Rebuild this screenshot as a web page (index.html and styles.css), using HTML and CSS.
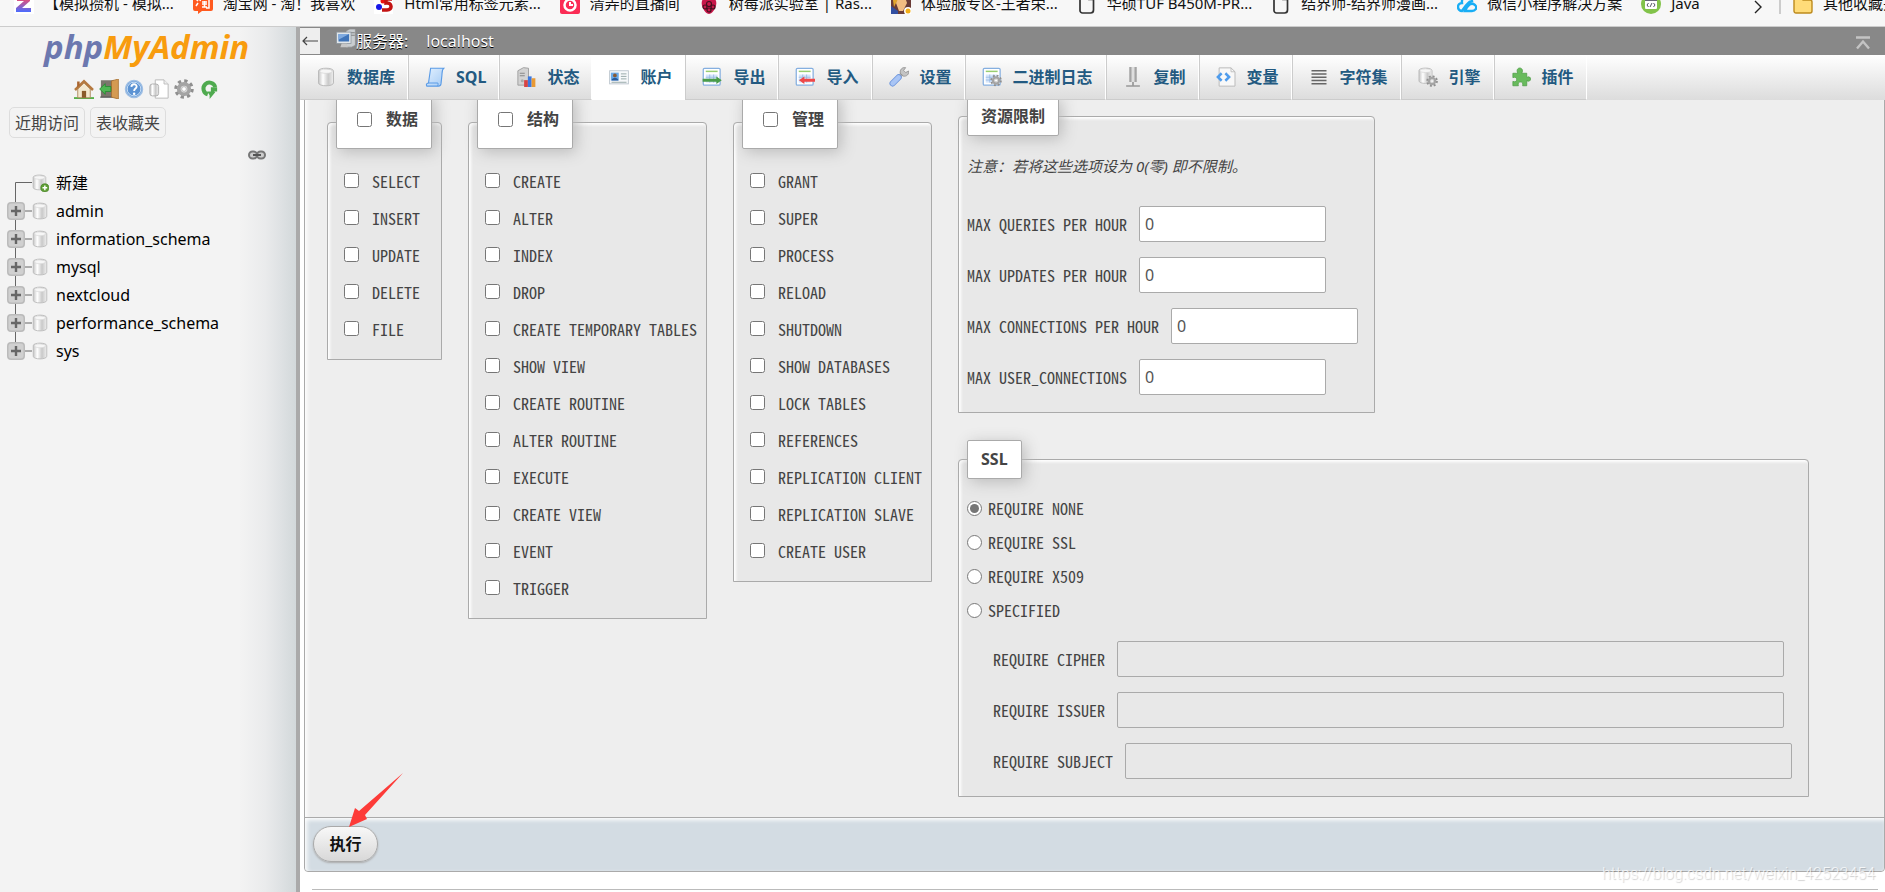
FILE: index.html
```html
<!DOCTYPE html>
<html lang="zh-CN">
<head>
<meta charset="utf-8">
<title>localhost | phpMyAdmin</title>
<link rel="stylesheet" href="styles.css">
</head>
<body>
<svg class="sprite" aria-hidden="true">
  <defs>
    <linearGradient id="cyl" x1="0" x2="1"><stop offset="0" stop-color="#c4c4c4"/><stop offset=".3" stop-color="#fff"/><stop offset=".65" stop-color="#c9c9c9"/><stop offset="1" stop-color="#efefef"/></linearGradient>
    <linearGradient id="blue" x1="0" x2="1" y2="1"><stop offset="0" stop-color="#e3f1ff"/><stop offset="1" stop-color="#a5cbf5"/></linearGradient>
    <linearGradient id="zed" x2="0" y2="1"><stop offset="0" stop-color="#ff4a5f"/><stop offset="1" stop-color="#4a6cff"/></linearGradient>
    <symbol id="db" viewBox="0 0 16 16"><path d="M2 3.300C2 .2 14 .2 14 3.300v9.400c0 3.100-12 3.100-12 0z" fill="url(#cyl)" stroke="#bbb" stroke-width=".8"/><ellipse cx="8" cy="3.400" rx="5" ry="1.700" fill="#f6f6f6" stroke="#d0d0d0" stroke-width=".5"/></symbol>
    <symbol id="gear" viewBox="0 0 16 16"><circle cx="8" cy="8" r="6.500" fill="none" stroke="#8f8f8f" stroke-width="2.600" stroke-dasharray="2.600 2.500"/><circle cx="8" cy="8" r="4.200" fill="#e4e4e4" stroke="#a4a4a4" stroke-width="3"/><circle cx="8" cy="8" r="1.900" fill="#fff" stroke="#aaa" stroke-width=".6"/></symbol>
    <symbol id="newdb" viewBox="0 0 16 16"><use href="#db" width="15" height="15"/><circle cx="12.300" cy="12.300" r="3.600" fill="#5f9f35" stroke="#3f7a1c" stroke-width=".6"/><path d="M12.300 10.200v4.200M10.200 12.300h4.200" stroke="#fff" stroke-width="1.300"/></symbol>
    <symbol id="home" viewBox="0 0 16 16"><path d="M0 14.500h16V16H0z" fill="#57b04a"/><path d="M3 8l5-5 5 5v7H3z" fill="#f3e8cf" stroke="#a88255" stroke-width=".7"/><path d="M6.300 9.500h3.400V15H6.300z" fill="#8a5a2a"/><path d="M.8 8.800L8 1.800l7.200 7" fill="none" stroke="#b5793f" stroke-width="2"/><path d="M2.500 2h2v3l-2 1.800z" fill="#a9652f"/></symbol>
    <symbol id="exit" viewBox="0 0 16 16"><path d="M1.500 1H12v13.500H1.500z" fill="#7a756d"/><path d="M1 14h10v1H1z" fill="#555"/><path d="M10 1.500L15.500 0v16L10 14.500z" fill="#d49a52" stroke="#a36b2b" stroke-width=".6"/><path d="M.5 8L5 3.700V6h4.500v4H5v2.300z" fill="#4fb554" stroke="#1f8a2c" stroke-width=".6"/></symbol>
    <symbol id="help" viewBox="0 0 16 16"><circle cx="8" cy="8" r="6.800" fill="#5c93d3" stroke="#9fbfe4" stroke-width="1.200"/><circle cx="8" cy="8" r="5.500" fill="none" stroke="#dcebfa" stroke-width=".7"/><path d="M5.900 6.300C6 3.400 10.300 3.600 10.100 6.200 10 7.600 8.100 7.700 8.100 9.500" fill="none" stroke="#fff" stroke-width="1.500"/><circle cx="8.100" cy="11.700" r="1" fill="#fff"/></symbol>
    <symbol id="docs" viewBox="0 0 16 16"><path d="M5 .7h7l3.300 3.300v11.300H5z" fill="#fff" stroke="#bbb" stroke-width=".8"/><path d="M12 .7V4h3.300" fill="#eee" stroke="#bbb" stroke-width=".7"/><rect x=".7" y="4" width="7" height="9.500" rx="2" fill="url(#cyl)" stroke="#aaa" stroke-width=".7"/></symbol>
    <symbol id="reload" viewBox="0 0 16 16"><path d="M13 6.500A4.800 4.800 0 1 0 7 12.300" fill="none" stroke="#4faa4f" stroke-width="3.200"/><path d="M9.500 6.500h5V10H12l1 .5-4.500 5.500v-3L6.500 10h3z" fill="#4faa4f"/></symbol>
    <symbol id="sql" viewBox="0 0 16 16"><path d="M4.500 1H15c-1.500 1-1.200 3-1.500 6l-.7 6.500c-.2 1.300-1 1.800-2 1.800H1.500c-1-1.500.3-2.500 1.300-2.500z" fill="url(#blue)" stroke="#5a9be6" stroke-width=".9"/><path d="M2.800 12.800h7.500c.3 1 .2 1.800-.5 2.500" fill="none" stroke="#5a9be6" stroke-width=".8"/></symbol>
    <symbol id="status" viewBox="0 0 16 16"><path d="M1.500 3L6 .5 10 1v13.500H1.500z" fill="#d3d3d3" stroke="#999" stroke-width=".7"/><path d="M3 5h4M3 7h4" stroke="#888" stroke-width=".8"/><circle cx="5" cy="11" r="1.200" fill="#aaa"/><path d="M6.500 10.500h3V16h-3z" fill="#d84343"/><path d="M9.500 7.500h3V16h-3z" fill="#3c78df"/><path d="M12.500 9h3v7h-3z" fill="#e99a35"/></symbol>
    <symbol id="users" viewBox="0 0 16 16"><rect x=".5" y="3" width="15" height="10.500" fill="#f7f9fb" stroke="#b9c3cc" stroke-width=".7"/><path d="M1.500 4.500h6.300v6.300H1.500z" fill="#69a9e8"/><circle cx="4.700" cy="6.700" r="1.500" fill="#8b5a32"/><path d="M2 10.800c.5-3 5-3 5.500 0z" fill="#285a9c"/><path d="M9.500 5.500h4.500M9.500 7.500h4.500M9.500 9.500h4.500M2 12.200h12" stroke="#9aa" stroke-width=".8"/></symbol>
    <symbol id="sheet" viewBox="0 0 16 16"><rect x="1" y="1" width="13.500" height="13.500" rx="1" fill="#fff" stroke="#85afe0"/><path d="M3 3.500h9.500" stroke="#98ce70" stroke-width="1.200"/><path d="M3 6h9.500v6.500H3z" fill="#d5e6fb"/><path d="M3 8.200h9.500M3 10.400h9.500M6.200 6v6.500M9.300 6v6.500" stroke="#91b3df" stroke-width=".6"/></symbol>
    <symbol id="export" viewBox="0 0 16 16"><use href="#sheet"/><path d="M.5 9.300h11V7.500l4.300 3-4.300 3v-1.700H.5z" fill="#499c49"/></symbol>
    <symbol id="import" viewBox="0 0 16 16"><use href="#sheet"/><path d="M16 9.300H7.500V7.500l-4.300 3 4.300 3v-1.700H16z" fill="#ef4848"/></symbol>
    <symbol id="binlog" viewBox="0 0 16 16"><use href="#sheet"/><use href="#gear" x="6.500" y="6" width="9.500" height="9.500"/></symbol>
    <symbol id="wrench" viewBox="0 0 16 16"><path d="M8 8l3.500-3.500" stroke="#aaa" stroke-width="3"/><path d="M9 5C8.500 2.200 10.500 0 13.300.5L11.700 2.700l1.600 1.700 2.500-1.200c.4 2.600-1.800 4.600-4.300 4.100z" fill="#c4c4c4" stroke="#888" stroke-width=".6"/><path d="M7.700 8.300L2.900 13.100" stroke="#6f97dd" stroke-width="5" stroke-linecap="round"/><path d="M7.700 8.300L2.900 13.100" stroke="#a9c5f5" stroke-width="3.600" stroke-linecap="round"/></symbol>
    <symbol id="repl" viewBox="0 0 16 16"><path d="M5 0h2v12H5zM9 0h2v12H9z" fill="#a4a4a4"/><path d="M7 0h2v12H7z" fill="#dedede"/><path d="M7.300 12h1.400v2.500H7.300zM2.500 14.500h11v1.200h-11z" fill="#999"/></symbol>
    <symbol id="vars" viewBox="0 0 16 16"><path d="M2.500.7h9.500l3.200 3.100v11.500H2.500z" fill="#f8f8f8" stroke="#bbb" stroke-width=".8"/><path d="M12 .7v3.100h3.200" fill="none" stroke="#bbb" stroke-width=".7"/><path d="M4.500 5L1.500 8l3 3M7.500 5l3 3-3 3" fill="none" stroke="#4f9cec" stroke-width="2"/></symbol>
    <symbol id="chars" viewBox="0 0 16 16"><path d="M2 3h12M2 5.600h12M2 8.200h12M2 10.800h12M2 13.400h12" stroke="#666" stroke-width="1.300"/></symbol>
    <symbol id="engine" viewBox="0 0 16 16"><use href="#db" x="-1" width="14" height="14"/><use href="#gear" x="6.500" y="6.500" width="9.500" height="9.500"/></symbol>
    <symbol id="plugin" viewBox="0 0 16 16"><path d="M1.500 5h4C4 2.300 5.500.8 7 .8S10 2.300 8.600 5h4v3.300c1.800-1 3-.2 3 1.300s-1.200 2.300-3 1.300V15H9.300c.6-2.200-.4-3-1.700-3s-2.400.8-1.700 3H1.500v-3.500c2.200.8 3-.2 3-1.500s-.8-2.300-3-1.500z" fill="#68bb5c" stroke="#4d9c45" stroke-width=".6"/></symbol>
    <symbol id="server" viewBox="0 0 16 16"><path d="M8 1.500L11 0h4.500v13l-3 1.500H8z" fill="#c9cdd0" stroke="#888" stroke-width=".5"/><path d="M12 3h3M12 5h3" stroke="#777" stroke-width=".7"/><rect x=".5" y="2.500" width="11.500" height="9" fill="#e1e6ea" stroke="#8b949c" stroke-width=".6"/><path d="M2 4h8.500v6H2z" fill="#3f74b9"/><path d="M2 4h8.500L2 8.500z" fill="#7faae0"/><path d="M4.500 11.500h4l1 3h-6z" fill="#c7c7c7"/></symbol>
    <symbol id="page" viewBox="0 0 16 20"><path d="M3.500 1h7l4 4v11a3 3 0 0 1-3 3h-8a2.500 2.500 0 0 1-2.500-2.500v-13A2.500 2.500 0 0 1 3.500 1zM10 1v4.500h4.500" fill="none" stroke="#333" stroke-width="1.700"/></symbol>
    <symbol id="node" viewBox="0 0 30 28"><path d="M8.500 0v28M8.500 14H25" stroke="#666" fill="none"/><rect x="0" y="5" width="18" height="18" rx="4" fill="#bbb"/><rect x="1.500" y="6.500" width="15" height="15" rx="3" fill="#d0d0d0"/><path d="M9 9v10M4 14h10" stroke="#666" stroke-width="2.400"/></symbol>
    <symbol id="nodelast" viewBox="0 0 30 28"><path d="M8.500 0v14H25" stroke="#666" fill="none"/><rect x="0" y="5" width="18" height="18" rx="4" fill="#bbb"/><rect x="1.500" y="6.500" width="15" height="15" rx="3" fill="#d0d0d0"/><path d="M9 9v10M4 14h10" stroke="#666" stroke-width="2.400"/></symbol>
    <symbol id="nodefirst" viewBox="0 0 30 28"><path d="M8.500 28V13.500H25" stroke="#666" fill="none"/></symbol>
  </defs>
</svg>

<div class="bookmarks">
  <a class="bm" href="#"><svg viewBox="0 0 20 20"><path fill="#fff" d="M0 0h20v20H0z"/><path d="M3 3h13v4l-8 7h9v4H2v-4l8-7H3z" fill="url(#zed)"/></svg><span>【模拟攒机 - 模拟...</span></a>
  <a class="bm" href="#"><svg viewBox="0 0 20 20"><path d="M2 0h16a2 2 0 0 1 2 2v13a2 2 0 0 1-2 2h-9l-4 3v-3H2a2 2 0 0 1-2-2V2z" fill="#ff5a1f"/><path d="M3 5l2 2M3 12l2-3M8 4l-1 3M8 5h8v9h-3M9 8h5M11.500 7v6M9 10h5M9 13h5" stroke="#fff" stroke-width="1.500" fill="none"/></svg><span>淘宝网 - 淘！我喜欢</span></a>
  <a class="bm" href="#"><svg viewBox="0 0 20 20"><path d="M0 0h19v20H0z" fill="#fff"/><circle cx="5" cy="13" r="3" fill="#1717e8"/><circle cx="9" cy="7" r="2.500" fill="#e11"/><path d="M18 5h-6v4c6-1 7 7 1 7H8" fill="none" stroke="#c31313" stroke-width="3.500"/></svg><span>Html常用标签元素...</span></a>
  <a class="bm" href="#"><svg viewBox="0 0 20 20"><rect width="20" height="20" rx="2" fill="#fb2c55"/><circle cx="10" cy="11" r="5.500" fill="none" stroke="#fff" stroke-width="2.500"/><path d="M10 8v3h3" stroke="#fff" stroke-width="2" fill="none"/></svg><span>清弄的直播间</span></a>
  <a class="bm" href="#"><svg viewBox="0 0 20 20"><path d="M10 3c7-1 9 6 6 11-1 3-4 6-6 6s-5-3-6-6C1 9 3 2 10 3z" fill="#c8174a"/><g fill="none" stroke="#45101f" stroke-width="1.200"><circle cx="10" cy="10" r="2.500"/><circle cx="6" cy="13" r="2"/><circle cx="14" cy="13" r="2"/><circle cx="10" cy="16" r="2"/></g></svg><span>树莓派实验室 | Ras...</span></a>
  <a class="bm" href="#"><svg viewBox="0 0 20 20"><path fill="#6a3c37" d="M0 0h20v20H0z"/><path d="M6 3h8l2 6-4 8H8L5 9z" fill="#f2bd82"/><path d="M1 0h16l-3 6-7-1-4 8z" fill="#e1a52d"/><path d="M0 12l7 5v3H0z" fill="#324fa1"/><circle cx="17" cy="17" r="4" fill="#fff"/><circle cx="17" cy="17" r="2.500" fill="#f3ae16"/></svg><span>体验服专区-王者荣...</span></a>
  <a class="bm" href="#"><svg viewBox="0 0 16 20"><use href="#page"/></svg><span>华硕TUF B450M-PR...</span></a>
  <a class="bm" href="#"><svg viewBox="0 0 16 20"><use href="#page"/></svg><span>结界师-结界师漫画...</span></a>
  <a class="bm" href="#"><svg viewBox="0 0 20 20"><path d="M5 17a4 4 0 0 1 0-8C4 1 14 0 15 7c-4 0-7 6-10 10zM8 17c3-6 6-9 10-6 3 3 0 6-3 6z" fill="none" stroke="#19aef5" stroke-width="2.400"/></svg><span>微信小程序解决方案</span></a>
  <a class="bm" href="#"><svg viewBox="0 0 20 20"><circle cx="10" cy="10" r="10" fill="#82c34a"/><rect x="4" y="4" width="12" height="11" rx="1" fill="#fff"/><path d="M4 4h12v3H4z" fill="#667"/><path d="M7.500 9L6 11l1.500 2M12.500 9l1.500 2-1.500 2M11 9l-2 4" fill="none" stroke="#556"/></svg><span>Java</span></a>
  <button class="more" type="button" aria-label="更多书签"><svg viewBox="0 0 8 14"><path d="M1 1l6 6-6 6" fill="none" stroke="#222" stroke-width="1.400"/></svg></button>
  <a class="bm other" href="#"><svg viewBox="0 0 20 20"><path d="M1 3h7l2 3h7a2 2 0 0 1 2 2v9a2 2 0 0 1-2 2H3a2 2 0 0 1-2-2z" fill="#ffdc79" stroke="#bd8a1d" stroke-width="1.400"/></svg><span>其他收藏夹</span></a>
</div>

<div class="frame">
  <aside class="sidebar">
    <a class="logo" href="#"><span class="php">php</span>MyAdmin</a>
    <div class="quick">
      <a href="#" aria-label="主页"><svg><use href="#home"/></svg></a>
      <a href="#" aria-label="退出"><svg><use href="#exit"/></svg></a>
      <a href="#" aria-label="文档"><svg><use href="#help"/></svg></a>
      <a href="#" aria-label="手册"><svg><use href="#docs"/></svg></a>
      <a href="#" aria-label="设置"><svg><use href="#gear"/></svg></a>
      <a href="#" aria-label="刷新"><svg><use href="#reload"/></svg></a>
    </div>
    <div class="lists"><button type="button">近期访问</button><button type="button">表收藏夹</button></div>
    <div class="linkrow"><svg viewBox="0 0 18 10"><rect x="1" y="1.500" width="8" height="7" rx="3.500" fill="#ccc" stroke="#777" stroke-width="2"/><rect x="9" y="1.500" width="8" height="7" rx="3.500" fill="#ccc" stroke="#777" stroke-width="2"/><path d="M5 5h8" stroke="#555" stroke-width="2"/></svg></div>
    <ul class="tree">
      <li><svg class="node"><use href="#nodefirst"/></svg><svg class="ico"><use href="#newdb"/></svg><a href="#">新建</a></li>
      <li><svg class="node"><use href="#node"/></svg><svg class="ico"><use href="#db"/></svg><a href="#">admin</a></li>
      <li><svg class="node"><use href="#node"/></svg><svg class="ico"><use href="#db"/></svg><a href="#">information_schema</a></li>
      <li><svg class="node"><use href="#node"/></svg><svg class="ico"><use href="#db"/></svg><a href="#">mysql</a></li>
      <li><svg class="node"><use href="#node"/></svg><svg class="ico"><use href="#db"/></svg><a href="#">nextcloud</a></li>
      <li><svg class="node"><use href="#node"/></svg><svg class="ico"><use href="#db"/></svg><a href="#">performance_schema</a></li>
      <li><svg class="node"><use href="#nodelast"/></svg><svg class="ico"><use href="#db"/></svg><a href="#">sys</a></li>
    </ul>
  </aside>

  <main class="main">
    <header class="serverbar">
      <button class="collapse" type="button" aria-label="收起"><svg viewBox="0 0 16 10"><path d="M16 5H1M5 1L1 5l4 4" fill="none" stroke="#444" stroke-width="1.200"/></svg></button>
      <svg class="srv"><use href="#server"/></svg>
      <span class="crumb">服务器:</span><a href="#">localhost</a>
      <button class="totop" type="button" aria-label="顶部"><svg viewBox="0 0 14 14"><path d="M0 1.500h14M1 12.500l6-7 6 7" fill="none" stroke="#c4c4c4" stroke-width="2.400"/></svg></button>
    </header>
    <nav class="tabs">
      <a href="#"><svg><use href="#db"/></svg>数据库</a>
      <a href="#"><svg><use href="#sql"/></svg>SQL</a>
      <a href="#"><svg><use href="#status"/></svg>状态</a>
      <a href="#" class="active"><svg><use href="#users"/></svg>账户</a>
      <a href="#"><svg><use href="#export"/></svg>导出</a>
      <a href="#"><svg><use href="#import"/></svg>导入</a>
      <a href="#"><svg><use href="#wrench"/></svg>设置</a>
      <a href="#"><svg><use href="#binlog"/></svg>二进制日志</a>
      <a href="#"><svg><use href="#repl"/></svg>复制</a>
      <a href="#"><svg><use href="#vars"/></svg>变量</a>
      <a href="#"><svg><use href="#chars"/></svg>字符集</a>
      <a href="#"><svg><use href="#engine"/></svg>引擎</a>
      <a href="#"><svg><use href="#plugin"/></svg>插件</a>
    </nav>

    <form class="privileges">
      <div class="columns">
        <fieldset class="group">
          <legend><label><input type="checkbox">数据</label></legend>
          <label><input type="checkbox">SELECT</label>
          <label><input type="checkbox">INSERT</label>
          <label><input type="checkbox">UPDATE</label>
          <label><input type="checkbox">DELETE</label>
          <label><input type="checkbox">FILE</label>
        </fieldset>
        <fieldset class="group">
          <legend><label><input type="checkbox">结构</label></legend>
          <label><input type="checkbox">CREATE</label>
          <label><input type="checkbox">ALTER</label>
          <label><input type="checkbox">INDEX</label>
          <label><input type="checkbox">DROP</label>
          <label><input type="checkbox">CREATE TEMPORARY TABLES</label>
          <label><input type="checkbox">SHOW VIEW</label>
          <label><input type="checkbox">CREATE ROUTINE</label>
          <label><input type="checkbox">ALTER ROUTINE</label>
          <label><input type="checkbox">EXECUTE</label>
          <label><input type="checkbox">CREATE VIEW</label>
          <label><input type="checkbox">EVENT</label>
          <label><input type="checkbox">TRIGGER</label>
        </fieldset>
        <fieldset class="group">
          <legend><label><input type="checkbox">管理</label></legend>
          <label><input type="checkbox">GRANT</label>
          <label><input type="checkbox">SUPER</label>
          <label><input type="checkbox">PROCESS</label>
          <label><input type="checkbox">RELOAD</label>
          <label><input type="checkbox">SHUTDOWN</label>
          <label><input type="checkbox">SHOW DATABASES</label>
          <label><input type="checkbox">LOCK TABLES</label>
          <label><input type="checkbox">REFERENCES</label>
          <label><input type="checkbox">REPLICATION CLIENT</label>
          <label><input type="checkbox">REPLICATION SLAVE</label>
          <label><input type="checkbox">CREATE USER</label>
        </fieldset>
        <div class="side">
          <fieldset class="limits">
            <legend>资源限制</legend>
            <p>注意：若将这些选项设为 0(零) 即不限制。</p>
            <div class="fields">
              <label>MAX QUERIES PER HOUR<input type="text" value="0"></label>
              <label>MAX UPDATES PER HOUR<input type="text" value="0"></label>
              <label>MAX CONNECTIONS PER HOUR<input type="text" value="0"></label>
              <label>MAX USER_CONNECTIONS<input type="text" value="0"></label>
            </div>
          </fieldset>
          <fieldset class="ssl">
            <legend>SSL</legend>
            <label class="radio"><input type="radio" name="ssl" checked>REQUIRE NONE</label>
            <label class="radio"><input type="radio" name="ssl">REQUIRE SSL</label>
            <label class="radio"><input type="radio" name="ssl">REQUIRE X509</label>
            <label class="radio"><input type="radio" name="ssl">SPECIFIED</label>
            <div class="fields">
              <label>REQUIRE CIPHER<input type="text" disabled></label>
              <label>REQUIRE ISSUER<input type="text" disabled></label>
              <label>REQUIRE SUBJECT<input type="text" disabled></label>
            </div>
          </fieldset>
        </div>
      </div>
      <div class="submit">
        <button type="button">执行</button>
        <svg class="pointer" viewBox="0 0 54 54"><path d="M0 54L6 35l4 3L54 0 16 42l2 4z" fill="#fd3b38"/></svg>
      </div>
    </form>
    <hr>
  </main>
</div>
<div class="watermark">https://blog.csdn.net/weixin_42523454</div>
</body>
</html>
```
FILE: styles.css
```css
* { box-sizing: border-box; }
body {
  margin: 0;
  height: 100vh;
  overflow: hidden;
  display: flex;
  flex-direction: column;
  background: #fff;
  color: #444;
  font: 16px/24px "Noto Sans", "Noto Sans CJK SC", sans-serif;
}
a { color: inherit; text-decoration: none; }
button { font: inherit; color: inherit; padding: 0; border: 0; background: none; }
.sprite { position: absolute; width: 0; height: 0; }

.bookmarks {
  flex: none;
  display: flex;
  align-items: flex-end;
  height: 27px;
  padding: 0 0 12px 14px;
  overflow: hidden;
  white-space: nowrap;
  background: #f7f7f7;
  border-bottom: 1px solid #ccc;
  color: #111;
  font-size: 15px;
  line-height: 18px;
}
.bm { flex: none; display: flex; gap: 10px; margin-right: 19px; }
.bm svg { flex: none; width: 20px; height: 20px; }
.more { flex: none; width: 8px; height: 20px; margin: 0 17px 0 auto; }
.more svg { display: block; width: 8px; height: 14px; margin-top: 5px; }
.other { width: 106px; margin: 0; padding-left: 12px; border-left: 2px solid #ccc; }

.frame { flex: 1; display: flex; min-height: 0; }
.sidebar {
  flex: none;
  width: 300px;
  border-right: 4px solid #aaa;
  background: linear-gradient(to right, #f3f3f3 240px, #eaebec 265px, #dfe2e4 280px, #d2d8da 296px);
}
.logo {
  display: block;
  margin: 0 0 12px 44px;
  color: #f89c0e;
  font-size: 33px;
  font-style: italic;
  font-weight: 700;
  font-family: "Open Sans", sans-serif;
  line-height: 40px;
}
.php { color: #6c78af; }
.quick { display: flex; gap: 5px; padding-left: 74px; }
.quick svg { display: block; width: 20px; height: 20px; }
.lists { display: flex; gap: 5px; margin: 8px 0 0 9px; }
.lists button { height: 31px; padding: 0 5px; border: 1px solid #ddd; border-radius: 5px; }
.linkrow { display: flex; justify-content: flex-end; margin: 12px 30px 9px 0; }
.linkrow svg { width: 18px; height: 10px; }
.tree { margin: 0; padding: 0 0 0 7px; list-style: none; color: #000; }
.tree li { display: flex; align-items: center; height: 28px; }
.node { width: 30px; height: 28px; margin-right: -6px; }
.ico { width: 18px; height: 18px; margin-right: 7px; }

.main { flex: 1; min-width: 0; }
.serverbar {
  position: relative;
  z-index: 2;
  display: flex;
  align-items: center;
  height: 28px;
  background: #888;
  color: #fff;
  text-shadow: 0 1px 0 #000;
}
.collapse { display: flex; align-items: center; justify-content: center; width: 20px; height: 26px; background: #eee; }
.collapse svg { width: 16px; height: 10px; }
.srv { width: 20px; height: 20px; margin: -4px 0 0 16px; }
.crumb { margin-right: 18px; }
.totop { width: 14px; height: 14px; margin: 4px 15px 0 auto; }
.totop svg { display: block; width: 14px; height: 14px; }

.tabs {
  position: relative;
  z-index: 2;
  display: flex;
  height: 45px;
  background: linear-gradient(#fff, #dcdcdc);
  color: #235a81;
  font-weight: bold;
}
.tabs a {
  display: flex;
  align-items: center;
  padding: 0 12px 0 16px;
  border-left: 1px solid #ccc;
  border-right: 1px solid #fff;
  border-bottom: 1px solid #ccc;
}
.tabs a:first-child { border-left-color: transparent; padding-left: 15px; }
.tabs svg { width: 20px; height: 20px; margin-right: 11px; }
.tabs .active { background: #fff; border-color: #fff; }

.privileges { margin: -6px 0 17px 4px; border: 1px solid #aaa; border-radius: 4px; background: #eee; box-shadow: inset 2px 2px 4px #fff; }
.columns { display: flex; align-items: flex-start; gap: 26px; padding: 0 22px 20px; }
fieldset {
  min-width: 0;
  margin: 0;
  border: 1px solid #aaa;
  border-radius: 4px 4px 0 0;
  background: #e8e8e8;
  box-shadow: inset 2px 2px 3px #fff;
  font-family: "Noto Sans Mono CJK SC", "Liberation Mono", monospace;
  white-space: nowrap;
}
legend {
  height: 39px;
  padding: 0 13px;
  border: 1px solid #aaa;
  border-radius: 2px;
  background: #fff;
  box-shadow: 3px 3px 15px #bbb;
  font: bold 16px/37px "Noto Sans", "Noto Sans CJK SC", sans-serif;
}
label { display: flex; align-items: center; }
input[type="checkbox"], input[type="radio"] { width: 15px; height: 15px; margin: 0; accent-color: #767676; }
.group { flex: none; padding: 13px 9px 12px 8px; }
.group > label { height: 37px; padding-left: 8px; gap: 13px; }
.group > legend { height: 54px; padding: 0 13px 0 20px; }
.group > legend label { height: 46px; gap: 14px; }

.side { display: flex; flex-direction: column; align-items: flex-start; gap: 27px; padding-top: 2px; }
.limits { padding: 19px 16px 17px 8px; }
.limits p { margin: 0 0 29px; font: italic 15px/22px "Noto Sans", "Noto Sans CJK SC", sans-serif; }
.fields { display: flex; flex-direction: column; gap: 15px; }
.fields label { gap: 12px; }
.fields input {
  width: 187px;
  height: 36px;
  padding: 0 5px;
  border: 1px solid #aaa;
  border-radius: 2px;
  background: #fff;
  color: #555;
  font: 16px "Noto Sans", sans-serif;
}
.ssl { padding: 12px 16px 17px 8px; }
.ssl .fields { margin: 14px 0 0 26px; }
.ssl .fields input { width: 667px; background: #e8e8e8; }
.radio { height: 34px; gap: 6px; }

.submit {
  position: relative;
  height: 54px;
  padding: 8px;
  border-top: 1px solid #aaa;
  border-radius: 0 0 4px 4px;
  background: #d3dce3;
  box-shadow: inset 2px 2px 4px #fff;
}
.submit button {
  width: 65px;
  height: 36px;
  border: 1px solid #aaa;
  border-radius: 18px;
  background: linear-gradient(#f8f8f8, #d8d8d8);
  box-shadow: 0 1px 2px #aaa;
  color: #111;
  font-weight: bold;
}
.pointer { position: absolute; left: 44px; bottom: 44px; width: 54px; height: 54px; }
hr { margin: 0 7px 0 12px; border: 0; border-top: 1px solid #bbb; }
.watermark {
  position: absolute;
  right: 10px;
  bottom: 6px;
  color: #fffc;
  font: 300 16px/24px Roboto, sans-serif;
  text-shadow: 1px 1px 1px #0003;
}
```
